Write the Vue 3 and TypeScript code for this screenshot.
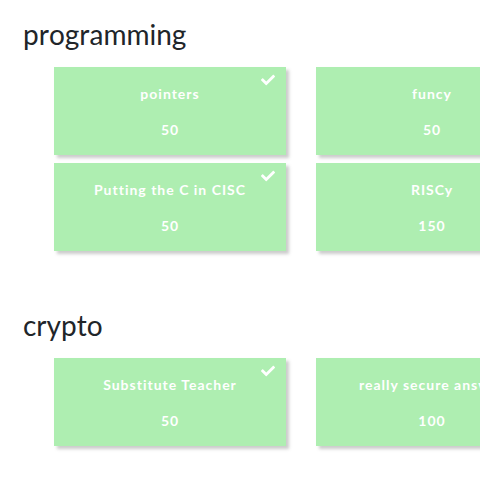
<script setup lang="ts">
interface Challenge {
  name: string
  value: number
}

interface Category {
  name: string
  challenges: Challenge[]
}

const categories: Category[] = [
  {
    name: 'programming',
    challenges: [
      { name: 'pointers', value: 50 },
      { name: 'funcy', value: 50 },
      { name: 'Putting the C in CISC', value: 50 },
      { name: 'RISCy', value: 150 },
    ],
  },
  {
    name: 'crypto',
    challenges: [
      { name: 'Substitute Teacher', value: 50 },
      { name: 'really secure answer', value: 100 },
    ],
  },
]
</script>

<template>
  <main class="board">
    <section v-for="category in categories" :key="category.name" class="category">
      <h3 class="heading">{{ category.name }}</h3>
      <div class="grid">
        <button
          v-for="challenge in category.challenges"
          :key="challenge.name"
          type="button"
          class="card"
        >
          <span>{{ challenge.name }}</span>
          <span>{{ challenge.value }}</span>
          <svg class="check" viewBox="0 0 512 512" aria-hidden="true">
            <path
              fill="currentColor"
              d="M173.898 439.404l-166.4-166.4c-9.997-9.997-9.997-26.206 0-36.204l36.203-36.204c9.997-9.998 26.207-9.998 36.204 0L192 312.69 432.095 72.596c9.997-9.997 26.207-9.997 36.204 0l36.203 36.204c9.997 9.997 9.997 26.206 0 36.204l-294.4 294.401c-9.998 9.997-26.207 9.997-36.204-.001z"
            />
          </svg>
        </button>
      </div>
    </section>
  </main>
</template>

<style>
body {
  margin: 0;
  background: #fff;
}
</style>

<style scoped>
.board {
  display: flex;
  flex-direction: column;
  gap: 57px;
  padding: 17px 23px 32px;
  overflow: hidden;
  color: #212529;
  font-family: Lato, sans-serif;
  font-kerning: none;
}

.heading {
  margin: 0 0 16px;
  font-size: 28px;
  font-weight: 400;
  line-height: 34px;
}

.grid {
  display: grid;
  grid-template-columns: repeat(2, minmax(232px, 1fr));
  gap: 8px 30px;
  padding: 0 31px;
}

.card {
  position: relative;
  display: flex;
  flex-direction: column;
  align-items: center;
  gap: 15px;
  padding: 16px 12px 15px;
  border: 0;
  background: #aeeeb1;
  box-shadow: 3px 3px 3px rgba(128, 128, 128, 0.4);
  color: #fff;
  font-family: inherit;
  font-size: 14px;
  font-weight: 700;
  line-height: 21px;
  letter-spacing: 1px;
  white-space: nowrap;
  cursor: pointer;
}

.check {
  position: absolute;
  top: 6px;
  right: 11px;
  width: 14px;
  height: 14px;
}
</style>
